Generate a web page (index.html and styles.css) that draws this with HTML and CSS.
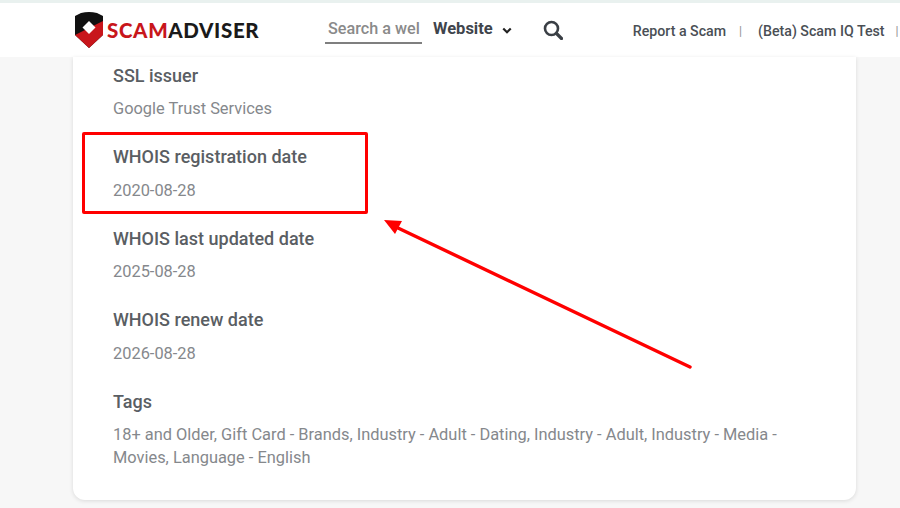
FILE: index.html
```html
<!DOCTYPE html>
<html lang="en">
<head>
<meta charset="utf-8">
<title>ScamAdviser</title>
<link rel="stylesheet" href="styles.css">
</head>
<body>
<header class="topbar">
  <a class="logo">
    <svg class="shield" viewBox="0 0 28 38" width="28" height="38" aria-hidden="true">
      <path d="M0 5 L6 2 Q14 0 22 2 L28 5 V24 L14 37 L0 24 Z" fill="#111"/>
      <path d="M0 24 L28 10 V24 L14 37 L0 24 Z" fill="#c8161b"/>
      <path d="M14 10 L20.500 16.500 L14 23 L7.500 16.500 Z" fill="#fff"/>
    </svg>
    <span class="wordmark"><span class="scam">SCAM</span>ADVISER</span>
  </a>
  <div class="search">Search a wel</div>
  <div class="select">Website
    <svg viewBox="0 0 12 8" width="10" height="7" aria-hidden="true"><path d="M1.5 1.5 L6 6 L10.500 1.500" fill="none" stroke="#222" stroke-width="2.600"/></svg>
  </div>
  <svg class="glass" viewBox="0 0 20 20" width="20" height="20" aria-hidden="true">
    <circle cx="8.500" cy="8.500" r="6.500" fill="none" stroke="#3a3f45" stroke-width="2.600"/>
    <path d="M13.500 13.500 L18.500 18.500" stroke="#3a3f45" stroke-width="3.200" stroke-linecap="round"/>
  </svg>
  <nav class="links">
    <a>Report a Scam</a><i class="sep">|</i><a>(Beta) Scam IQ Test</a><i class="sep last">|</i>
  </nav>
</header>

<main class="card">
  <section class="item"><h3>SSL issuer</h3><p>Google Trust Services</p></section>
  <section class="item"><h3>WHOIS registration date</h3><p>2020-08-28</p></section>
  <section class="item"><h3>WHOIS last updated date</h3><p>2025-08-28</p></section>
  <section class="item"><h3>WHOIS renew date</h3><p>2026-08-28</p></section>
  <section class="item"><h3>Tags</h3><p>18+ and Older, Gift Card - Brands, Industry - Adult - Dating, Industry - Adult, Industry - Media - Movies, Language - English</p></section>
</main>

<div class="highlight"></div>
<svg class="arrow" viewBox="0 0 900 508" width="900" height="508" aria-hidden="true">
  <path d="M690 367 L398 228" stroke="#f00" stroke-width="3.400" stroke-linecap="round"/>
  <path d="M384 220 L402 221 L395 234 Z" fill="#f00"/>
</svg>
</body>
</html>
```
FILE: styles.css
```css
html, body { margin: 0; padding: 0; }
body {
  width: 900px;
  height: 508px;
  overflow: hidden;
  position: relative;
  background: #f7f7f7;
  font-family: Roboto, "Liberation Sans", sans-serif;
  box-sizing: border-box;
  padding-top: 3px;
}
.topbar {
  height: 54px;
  background: #fff;
  display: flex;
  align-items: center;
  padding-left: 75px;
  box-shadow: 0 -3px 0 #e9f1ef;
  white-space: nowrap;
}
.logo { display: flex; align-items: center; gap: 4px; width: 250px; }
.wordmark { font-family: Lato, sans-serif; font-weight: 900; font-size: 20.500px; letter-spacing: .65px; color: #1a1a1a; }
.scam { color: #c8161b; }
.search { width: 97px; box-sizing: border-box; padding: 0 0 4px 3px; border-bottom: 2px solid #7f7f7f; color: #8a8a8a; font-size: 16.200px; font-weight: 500; margin-top: 2px; }
.select { display: flex; align-items: center; gap: 10px; margin-left: 11px; color: #3f454c; font-size: 16.500px; font-weight: 700; margin-top: -3px; }
.select svg { margin-top: 3px; margin-left: -1px; }
.glass { margin-left: 31px; }
.links { display: flex; align-items: center; margin-left: 70px; font-size: 14.200px; font-weight: 500; color: #4a4f55; margin-top: 1px; }
.sep { font-style: normal; color: #999; font-size: 12px; margin: 0 16px 0 13px; }
.sep.last { margin: 0 0 0 11px; }
.card {
  width: 783px;
  height: 443px;
  margin-left: 73px;
  padding: 6.500px 40px 0;
  box-sizing: border-box;
  background: #fff;
  border-radius: 0 0 12px 12px;
  box-shadow: 0 1px 4px rgba(0,0,0,.12);
}
.item { height: 81.500px; }
.item h3 { margin: 0; font-size: 18px; font-weight: 500; line-height: 24px; color: #5a5e63; }
.item p { margin: 9.500px 0 0; font-size: 16.400px; line-height: 23px; color: #85888c; }
.highlight { position: absolute; left: 82px; top: 132px; width: 280px; height: 76px; border: 3px solid #f00; border-radius: 2px; }
.arrow { position: absolute; left: 0; top: 0; pointer-events: none; }
```
